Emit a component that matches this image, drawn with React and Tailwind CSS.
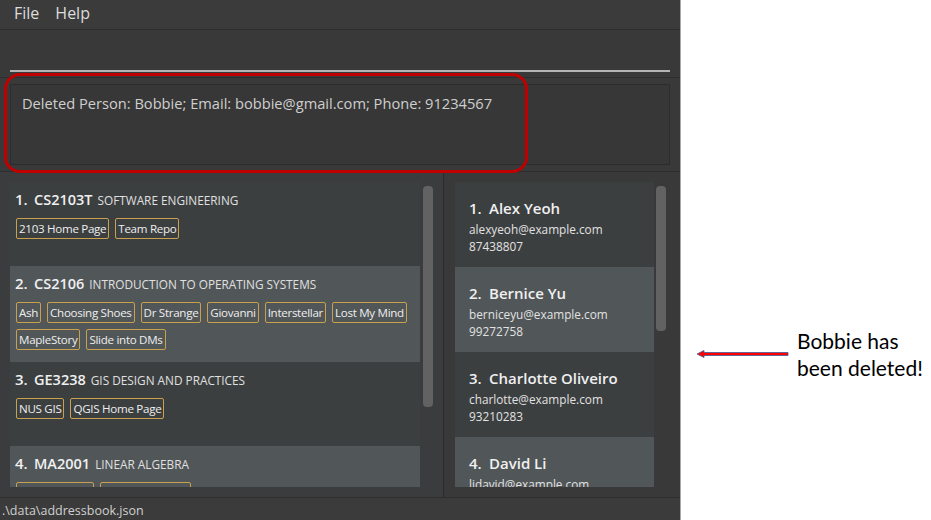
const modules = [
  {
    code: "CS2103T",
    name: "SOFTWARE ENGINEERING",
    tags: ["2103 Home Page", "Team Repo"],
  },
  {
    code: "CS2106",
    name: "INTRODUCTION TO OPERATING SYSTEMS",
    tags: [
      "Ash",
      "Choosing Shoes",
      "Dr Strange",
      "Giovanni",
      "Interstellar",
      "Lost My Mind",
      "MapleStory",
      "Slide into DMs",
    ],
  },
  {
    code: "GE3238",
    name: "GIS DESIGN AND PRACTICES",
    tags: ["NUS GIS", "QGIS Home Page"],
  },
  {
    code: "MA2001",
    name: "LINEAR ALGEBRA",
    tags: ["Lecture Notes", "Tutorial Answers"],
  },
];

const persons = [
  { name: "Alex Yeoh", email: "alexyeoh@example.com", phone: "87438807" },
  { name: "Bernice Yu", email: "berniceyu@example.com", phone: "99272758" },
  { name: "Charlotte Oliveiro", email: "charlotte@example.com", phone: "93210283" },
  { name: "David Li", email: "lidavid@example.com", phone: "91031282" },
];

function ModuleCard({ index, mod }) {
  const shade = index % 2 === 0 ? "bg-[#3c3f40]" : "bg-[#515658]";
  return (
    <div className={`${shade} shrink-0 min-h-[84px] px-[5px] pt-[6px] pb-[12px]`}>
      <div className="flex h-[22px] items-baseline text-[#f0f0f0]">
        <span className="w-[19px] text-[15px] font-semibold">{index + 1}.</span>
        <span className="text-[14.5px] font-semibold">{mod.code}</span>
        <span className="ml-[5px] text-[11.8px] text-[#e0e0e0]">{mod.name}</span>
      </div>
      <div className="mt-[8px] flex flex-wrap gap-x-[6px] gap-y-[6px] pl-[1px]">
        {mod.tags.map((t) => (
          <span
            key={t}
            className="flex h-[21px] items-center rounded-[2px] border border-[#c9a04e] px-[2px] text-[11.6px] tracking-[-0.3px] text-[#eeeeee]"
          >
            {t}
          </span>
        ))}
      </div>
    </div>
  );
}

function PersonCard({ index, p }) {
  const shade = index % 2 === 0 ? "bg-[#3c3f40]" : "bg-[#515658]";
  return (
    <div className={`${shade} shrink-0 h-[85px] px-[14px] pt-[15px]`}>
      <div className="flex h-[22px] items-center text-[15px] font-semibold text-[#f0f0f0]">
        <span className="w-[20px]">{index + 1}.</span>
        <span>{p.name}</span>
      </div>
      <div className="mt-[2px] text-[11.8px] leading-[17px] text-[#e2e2e2]">{p.email}</div>
      <div className="text-[11.8px] leading-[16px] text-[#e2e2e2]">{p.phone}</div>
    </div>
  );
}

function Scrollbar({ height }) {
  return (
    <div className="w-[12px] shrink-0 pt-[4px]">
      <div className={`${height} w-[10px] rounded-[4px] bg-[#626262]`} />
    </div>
  );
}

export default function App() {
  return (
    <div
      className="flex h-[520px] w-[931px] overflow-hidden bg-white"
      style={{ fontFamily: '"Open Sans", "Noto Sans", sans-serif' }}
    >
      <div className="relative flex h-[520px] w-[681px] shrink-0 flex-col border-r border-[#a8a8a8] bg-[#393939]">
        {/* Menu bar */}
        <div className="flex h-[30px] items-start gap-[16px] border-b border-[#2e2e2e] bg-[#3b3b3b] px-[14px] pt-[1px] text-[16px] text-[#dcdcdc]">
          <span>File</span>
          <span>Help</span>
        </div>

        {/* Command box */}
        <div className="flex h-[48px] items-end border-b border-[#2e2e2e] px-[10px] pb-[5px]">
          <div className="h-[2px] w-full bg-[#b4b4b4]" />
        </div>

        {/* Result display */}
        <div className="h-[94px] border-b border-[#2e2e2e] px-[10px] py-[6px]">
          <div className="h-[81px] border border-[#2c2c2c] bg-[#373737] px-[11px] pt-[8px] text-[14.65px] text-[#cfcfcf]">
            Deleted Person: Bobbie; Email: bobbie@gmail.com; Phone: 91234567
          </div>
        </div>

        {/* Lists */}
        <div className="flex min-h-0 flex-1">
          <div className="flex w-[444px] shrink-0 gap-[3px] border-r border-[#2a2a2a] bg-[#3b3c3d] pl-[10px] pt-[10px]">
            <div className="flex h-[305px] w-[410px] flex-col overflow-hidden">
              {modules.map((m, i) => (
                <ModuleCard key={m.code} index={i} mod={m} />
              ))}
            </div>
            <Scrollbar height="h-[221px]" />
          </div>
          <div className="flex flex-1 gap-[2px] pl-[11px] pt-[10px]">
            <div className="flex h-[305px] w-[199px] flex-col overflow-hidden">
              {persons.map((p, i) => (
                <PersonCard key={p.name} index={i} p={p} />
              ))}
            </div>
            <Scrollbar height="h-[145px]" />
          </div>
        </div>

        {/* Status bar */}
        <div className="flex h-[23px] items-end border-t border-[#2e2e2e] bg-[#3b3b3b] px-[2px] text-[12.5px] leading-[18px] text-[#d0d0d0]">
          .\data\addressbook.json
        </div>

        {/* Highlight */}
        <div className="pointer-events-none absolute left-[4px] top-[73px] h-[100px] w-[524px] rounded-[16px] border-[3px] border-[#c00000]" />
      </div>

      {/* Annotation */}
      <div className="flex flex-1 items-center self-start pl-[15px] pt-[327px]">
        <svg width="94" height="10" viewBox="0 0 94 10" className="shrink-0">
          <path d="M1 5 L8 1.5 L8 3.5 L92 3.5 L92 6.5 L8 6.5 L8 8.5 Z" fill="#ff0000" stroke="#3d5a99" strokeWidth="0.8" />
        </svg>
        <div
          className="ml-[7px] text-[21px] leading-[27px] text-black"
          style={{ fontFamily: "Lato, sans-serif" }}
        >
          Bobbie has
          <br />
          been deleted!
        </div>
      </div>
    </div>
  );
}
